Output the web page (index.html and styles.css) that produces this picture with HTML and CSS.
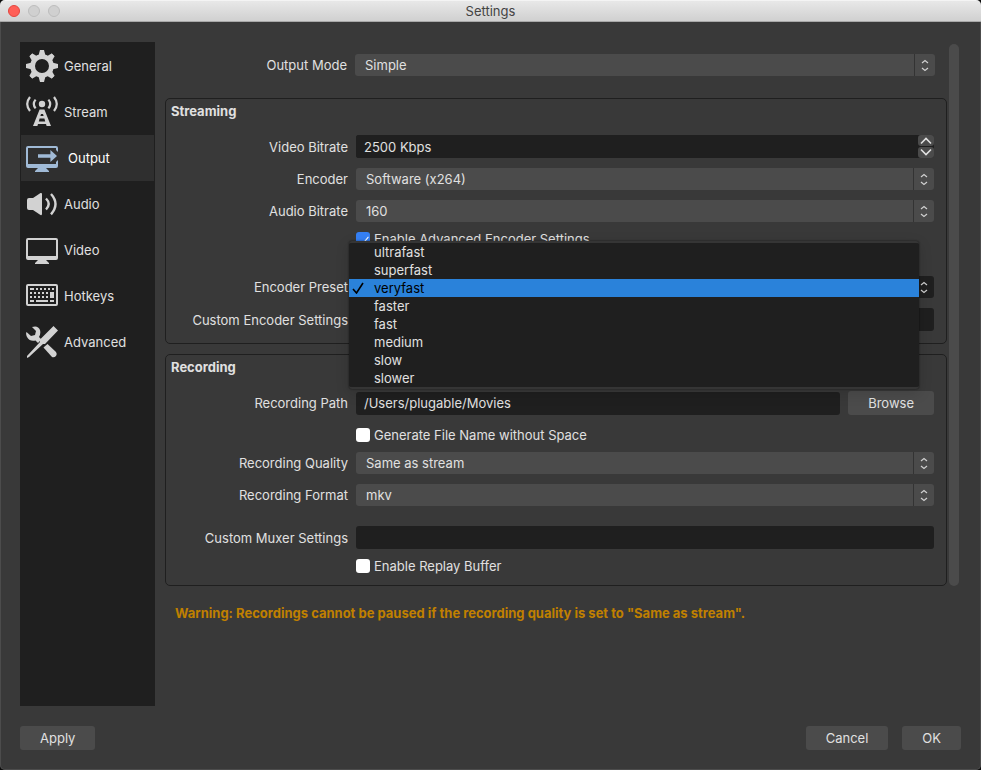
FILE: index.html
```html
<!DOCTYPE html>
<html lang="en">

<head>
    <meta charset="UTF-8">
    <meta name="viewport" content="width=device-width, initial-scale=1.0">
    <title>Settings</title>
    <link rel="stylesheet" href="styles.css">
</head>

<body>

    <!-- shared icon shapes -->
    <svg class="sprite" aria-hidden="true">
        <symbol id="arrows" viewBox="0 0 20 22">
            <path d="M7 9L10 6.5L13 9M7 14L10 16.5L13 14" fill="none" stroke="#d0d0d0" stroke-width="1.2" />
        </symbol>
        <symbol id="tooth" viewBox="0 0 32 32">
            <path d="M12.4 6L14 0H18L19.6 6Z" />
        </symbol>
    </svg>

    <div class="window">
        <header class="titlebar">
            <div class="lights">
                <button class="light close" aria-label="Close"></button>
                <button class="light" aria-label="Minimize" disabled></button>
                <button class="light" aria-label="Zoom" disabled></button>
            </div>
            <h1>Settings</h1>
        </header>

        <div class="main">
            <nav class="sidebar">
                <a href="#general" class="nav-item">
                    <svg viewBox="0 0 32 32">
                        <circle cx="16" cy="16" r="9.4" fill="none" stroke="currentColor" stroke-width="4.8" />
                        <use href="#tooth" width="32" height="32" />
                        <use href="#tooth" width="32" height="32" transform="rotate(45 16 16)" />
                        <use href="#tooth" width="32" height="32" transform="rotate(90 16 16)" />
                        <use href="#tooth" width="32" height="32" transform="rotate(135 16 16)" />
                        <use href="#tooth" width="32" height="32" transform="rotate(180 16 16)" />
                        <use href="#tooth" width="32" height="32" transform="rotate(225 16 16)" />
                        <use href="#tooth" width="32" height="32" transform="rotate(270 16 16)" />
                        <use href="#tooth" width="32" height="32" transform="rotate(315 16 16)" />
                    </svg>
                    General
                </a>
                <a href="#stream" class="nav-item">
                    <svg viewBox="0 0 32 32">
                        <circle cx="16" cy="8" r="3.2" />
                        <path d="M13.6 13.5H18.4L25 30H20.6L20 28H12L11.4 30H7ZM15 18L14.4 20H17.6L17 18ZM13.6 22.6L12.8 25.4H19.2L18.4 22.6Z" fill-rule="evenodd" />
                        <path d="M4 1Q-1.6 8 4 15M28 1Q33.6 8 28 15M9.6 3.6Q6 8 9.6 12.4M22.4 3.6Q26 8 22.4 12.4" fill="none" stroke="currentColor" stroke-width="2.2" />
                    </svg>
                    Stream
                </a>
                <a href="#output" class="nav-item active">
                    <svg viewBox="0 0 32 32">
                        <path d="M2 4H30Q32 4 32 6V10L30 8V6H2V22H30V20L32 18V24Q32 26 30 26H20L23 29V30H9V29L12 26H2Q0 26 0 24V6Q0 4 2 4Z" />
                        <path d="M12 12.2H24.4V8L31 14L24.4 20V15.8H12Z" />
                    </svg>
                    Output
                </a>
                <a href="#audio" class="nav-item">
                    <svg viewBox="0 0 32 32">
                        <path d="M1 12Q1 10 3 10H7L14.5 5Q16 4.5 16 6V26Q16 27.5 14.5 27L7 22H3Q1 22 1 20Z" />
                        <path d="M20 10.5Q25.4 16 20 21.5M25 6Q34 16 25 26.4" fill="none" stroke="currentColor" stroke-width="2.4" />
                    </svg>
                    Audio
                </a>
                <a href="#video" class="nav-item">
                    <svg viewBox="0 0 32 32">
                        <path d="M2 4H30Q32 4 32 6V24Q32 26 30 26H20L23 29V30H9V29L12 26H2Q0 26 0 24V6Q0 4 2 4ZM2 6V22H30V6Z" fill-rule="evenodd" />
                    </svg>
                    Video
                </a>
                <a href="#hotkeys" class="nav-item">
                    <svg viewBox="0 0 32 32">
                        <rect x="1" y="5" width="30" height="20" rx="1" fill="none" stroke="currentColor" stroke-width="2" />
                        <path d="M4 8h4v2h-4zM10 8h2v2h-2zM14 8h2v2h-2zM18 8h2v2h-2zM22 8h2v2h-2zM26 8h2v2h-2zM4 12h2v2h-2zM8 12h2v2h-2zM12 12h2v2h-2zM16 12h2v2h-2zM20 12h2v2h-2zM24 12h4v6h-4zM4 16h2v2h-2zM8 16h2v2h-2zM12 16h2v2h-2zM16 16h2v2h-2zM20 16h2v2h-2zM4 20h4v2h-4zM10 20h12v2h-12zM24 20h4v2h-4z" />
                    </svg>
                    Hotkeys
                </a>
                <a href="#advanced" class="nav-item">
                    <svg viewBox="0 0 32 32">
                        <path d="M6 1Q12-1 14 4Q15 8 13 11L15.4 13.4L12 17L9.5 14.5Q4 16 1 11Q-.5 8 .5 6L5 10L9 9L10 5Z" />
                        <path d="M17.5 21.5L21.5 18L30 26Q31.5 28 30 30Q28 32 26 31Z" />
                        <path d="M27.5 0L32 4.5L19 18H17L3 31L1 32V30L14 16V13.5Z" />
                    </svg>
                    Advanced
                </a>
            </nav>

            <main class="content">
                <div class="scroll-area">
                    <form class="panels" id="output-form">
                        <div class="row mode-row">
                            <label for="mode">Output Mode</label>
                            <div class="select">
                                <select id="mode"><option>Simple</option><option>Advanced</option></select>
                                <svg><use href="#arrows" /></svg>
                            </div>
                        </div>

                        <section class="group">
                            <h2>Streaming</h2>
                            <div class="row">
                                <label for="vbitrate">Video Bitrate</label>
                                <div class="spin">
                                    <input type="text" id="vbitrate" value="2500 Kbps">
                                    <div class="steps">
                                        <button type="button" aria-label="Increase"><svg viewBox="0 0 16 11"><path d="M3 8.5L8 3.5L13 8.5" /></svg></button>
                                        <button type="button" aria-label="Decrease"><svg viewBox="0 0 16 11"><path d="M3 2.5L8 7.5L13 2.5" /></svg></button>
                                    </div>
                                </div>
                            </div>
                            <div class="row">
                                <label for="encoder">Encoder</label>
                                <div class="select">
                                    <select id="encoder"><option>Software (x264)</option></select>
                                    <svg><use href="#arrows" /></svg>
                                </div>
                            </div>
                            <div class="row">
                                <label for="abitrate">Audio Bitrate</label>
                                <div class="select">
                                    <select id="abitrate"><option>160</option></select>
                                    <svg><use href="#arrows" /></svg>
                                </div>
                            </div>
                            <div class="row check-row">
                                <label class="check"><input type="checkbox" checked>Enable Advanced Encoder Settings</label>
                            </div>
                            <div class="row spaced">
                                <label for="preset">Encoder Preset</label>
                                <div class="select open">
                                    <select id="preset"><option>veryfast</option></select>
                                    <svg><use href="#arrows" /></svg>
                                    <ul class="menu" role="listbox" aria-label="Encoder Preset">
                                        <li role="option">ultrafast</li>
                                        <li role="option">superfast</li>
                                        <li role="option" class="selected" aria-selected="true"><svg viewBox="0 0 12 12"><path d="M1 7L4.5 11L11 1" /></svg>veryfast</li>
                                        <li role="option">faster</li>
                                        <li role="option">fast</li>
                                        <li role="option">medium</li>
                                        <li role="option">slow</li>
                                        <li role="option">slower</li>
                                    </ul>
                                </div>
                            </div>
                            <div class="row">
                                <label for="custom">Custom Encoder Settings</label>
                                <input type="text" id="custom">
                            </div>
                        </section>

                        <section class="group">
                            <h2>Recording</h2>
                            <div class="row path-row">
                                <label for="path">Recording Path</label>
                                <input type="text" id="path" value="/Users/plugable/Movies">
                                <button type="button" class="btn">Browse</button>
                            </div>
                            <div class="row check-row">
                                <label class="check"><input type="checkbox">Generate File Name without Space</label>
                            </div>
                            <div class="row">
                                <label for="quality">Recording Quality</label>
                                <div class="select">
                                    <select id="quality"><option>Same as stream</option></select>
                                    <svg><use href="#arrows" /></svg>
                                </div>
                            </div>
                            <div class="row">
                                <label for="format">Recording Format</label>
                                <div class="select">
                                    <select id="format"><option>mkv</option></select>
                                    <svg><use href="#arrows" /></svg>
                                </div>
                            </div>
                            <div class="row muxer-row">
                                <label for="muxer">Custom Muxer Settings</label>
                                <input type="text" id="muxer">
                            </div>
                            <div class="row check-row">
                                <label class="check"><input type="checkbox">Enable Replay Buffer</label>
                            </div>
                        </section>
                    </form>
                    <div class="scrollbar"></div>
                </div>
                <p class="warning">Warning: Recordings cannot be paused if the recording quality is set to "Same as stream".</p>
            </main>
        </div>

        <footer class="actions">
            <button class="btn apply">Apply</button>
            <button class="btn">Cancel</button>
            <button class="btn">OK</button>
        </footer>
    </div>

</body>

</html>
```

FILE: styles.css
```css
* {
    box-sizing: border-box;
}

body {
    margin: 0;
    background-color: #0c0c0c;
    color: #e0e0e0;
    font-family: Inter, "Liberation Sans", sans-serif;
    font-size: 13px;
    line-height: 18px;
}

button,
input,
select {
    font: inherit;
    color: inherit;
    border: none;
    margin: 0;
}

.sprite {
    display: none;
}

.window {
    display: flex;
    flex-direction: column;
    min-height: 100vh;
    background-color: #393939;
    border-radius: 5px;
    box-shadow: inset 0 0 0 1px #4c4c4c;
    overflow: hidden;
}

/* title bar */
.titlebar {
    position: relative;
    height: 22px;
    background: linear-gradient(#e8e8e8, #d0d0d0);
    border-top: 1px solid #f4f4f4;
    border-bottom: 1px solid #a8a8a8;
}

.titlebar h1 {
    margin: 0;
    font-size: 13px;
    font-weight: 400;
    line-height: 20px;
    text-align: center;
    color: #444;
}

.lights {
    position: absolute;
    left: 8px;
    top: 4px;
    display: flex;
    gap: 8px;
}

.light {
    width: 12px;
    height: 12px;
    padding: 0;
    border: 1px solid #bcbcbc;
    border-radius: 50%;
    background-color: #d0d0d0;
}

.light.close {
    background-color: #ff5f57;
    border-color: #e2463f;
}

/* body */
.main {
    display: flex;
    flex: 1;
    gap: 10px;
    padding: 20px 22px 20px 20px;
}

.sidebar {
    flex: none;
    width: 135px;
    padding: 1px;
    background-color: #1f1f1f;
}

.nav-item {
    display: flex;
    align-items: center;
    gap: 6px;
    height: 46px;
    padding-left: 5px;
    color: #e0e0e0;
    text-decoration: none;
}

.nav-item svg {
    width: 32px;
    height: 32px;
    fill: currentColor;
    color: #d2d2d2;
}

.nav-item.active {
    gap: 10px;
    background-color: #2f2f2f;
    color: #fff;
}

.nav-item.active svg {
    color: #a0bad6;
}

.content {
    flex: 1;
    min-width: 0;
}

.scroll-area {
    display: flex;
    gap: 2px;
}

.panels {
    flex: 1;
    min-width: 0;
}

.scrollbar {
    width: 10px;
    margin-top: 2px;
    border-radius: 5px;
    background-color: #4b4b4b;
}

.row {
    display: flex;
    align-items: center;
    gap: 8px;
    padding-right: 12px;
}

.row > label:first-child:not(.check) {
    flex: none;
    width: 182px;
    text-align: right;
    white-space: nowrap;
}

.mode-row {
    padding-top: 12px;
    margin-bottom: 22px;
}

.group {
    display: flex;
    flex-direction: column;
    gap: 10px;
    padding-bottom: 12px;
    margin-bottom: 10px;
    border: 1px solid #1f1f1f;
    border-radius: 5px;
}

.group:last-child {
    margin-bottom: 0;
}

.group h2 {
    margin: 3px 5px 5px;
    font-size: 13px;
    font-weight: 700;
    line-height: 18px;
}

input[type="text"] {
    flex: 1;
    min-width: 0;
    width: 100%;
    height: 23px;
    padding: 0 8px;
    border-radius: 3px;
    background-color: #1f1f1f;
}

.select {
    position: relative;
    display: flex;
    flex: 1;
    height: 22px;
    border-radius: 3px;
    background-color: #4b4b4b;
}

.select select {
    flex: 1;
    appearance: none;
    padding: 0 30px 0 10px;
    background: none;
}

.select > svg {
    position: absolute;
    right: 0;
    top: 0;
    width: 21px;
    height: 22px;
    border-left: 1px solid #333;
    pointer-events: none;
}

.select.open {
    background-color: #1f1f1f;
}

.spin {
    display: flex;
    flex: 1;
    border-radius: 3px;
    background-color: #1f1f1f;
}

.steps {
    display: flex;
    flex-direction: column;
    gap: 1px;
    width: 16px;
}

.steps button {
    height: 11px;
    padding: 0;
    border-radius: 3px;
    background-color: #4b4b4b;
}

.steps svg {
    display: block;
    width: 16px;
    height: 11px;
    fill: none;
    stroke: #e0e0e0;
    stroke-width: 1.6;
}

/* popup list of encoder presets */
.menu {
    position: absolute;
    z-index: 1;
    left: -7px;
    right: 15px;
    top: -35px;
    margin: 0;
    padding: 0;
    list-style: none;
    border-top: 2px solid #353535;
    border-bottom: 2px solid #353535;
    border-radius: 3px;
    background-color: #1f1f1f;
    box-shadow: 0 0 2px rgba(0, 0, 0, 0.6), 0 4px 14px rgba(0, 0, 0, 0.15);
}

.menu li {
    position: relative;
    height: 18px;
    padding-left: 25px;
}

.menu .selected {
    background-color: #2a82da;
    color: #000;
}

.menu svg {
    position: absolute;
    left: 3px;
    top: 3px;
    width: 12px;
    height: 12px;
    fill: none;
    stroke: #000;
    stroke-width: 1.6;
}

.check-row {
    height: 14px;
    padding-left: 190px;
}

.check {
    display: flex;
    align-items: center;
    gap: 4px;
}

.check input {
    display: grid;
    place-items: center;
    appearance: none;
    width: 14px;
    height: 14px;
    border-radius: 3px;
    background-color: #fff;
}

.check input:checked {
    background-color: #3580f5;
}

.check input:checked::before {
    content: "";
    width: 5px;
    height: 10px;
    border: solid #fff;
    border-width: 0 1px 1px 0;
    transform: rotate(40deg);
}

.spaced {
    margin-top: 20px;
}

.path-row {
    margin-bottom: 3px;
}

.muxer-row {
    margin-top: 10px;
}

.warning {
    margin: 18px 10px 0;
    font-weight: 700;
    color: #c08000;
}

.btn {
    height: 24px;
    padding: 0 20px;
    border-radius: 3px;
    background-color: #4b4b4b;
}

.actions {
    display: flex;
    gap: 14px;
    padding: 0 20px 20px;
}

.apply {
    margin-right: auto;
}
```
